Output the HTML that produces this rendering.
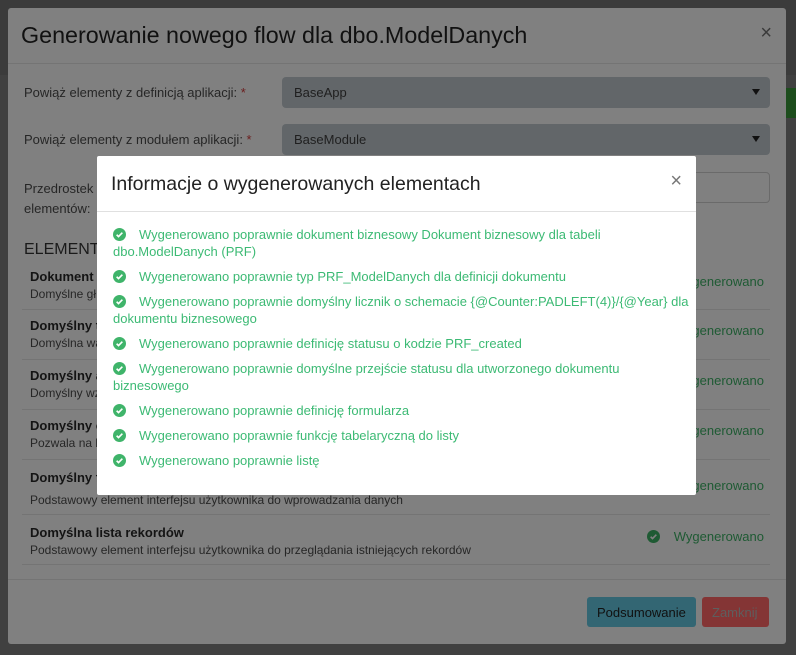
<!DOCTYPE html>
<html><head><meta charset="utf-8"><style>
*{box-sizing:border-box;margin:0;padding:0}
body{width:796px;height:654px;background:#3b3b3b;font-family:"Liberation Sans","DejaVu Sans",sans-serif;position:relative;overflow:hidden}
.bg1{position:absolute;left:0;top:75px;width:796px;height:580px;background:#404040}
.gbtn{position:absolute;left:776px;top:88px;width:20px;height:30px;background:#1d4d1d}
.outer{position:absolute;left:8px;top:8px;width:778px;height:636px;background:#808080;border-radius:3px;color:#1a1a1a}
.oh{height:56px;border-bottom:1px solid #747474;position:relative}
.oh h1{position:absolute;left:13px;top:14px;font-size:23.3px;font-weight:normal;color:#111}
.x{position:absolute;font-size:20px;color:#3a3a3a}
.lbl{position:absolute;left:16px;font-size:13px;color:#262626}
.lbl b{color:#6b1c1c;font-weight:normal}
.sel{position:absolute;left:274px;width:488px;height:31px;background:#626669;border-radius:4px;font-size:13px;color:#1f1f1f;padding:8px 12px}
.sel:after{content:"";position:absolute;right:10px;top:12px;border-left:4px solid transparent;border-right:4px solid transparent;border-top:6px solid #111}
.inp{position:absolute;left:274px;top:164px;width:488px;height:31px;border:1px solid #6a6a6a;border-radius:4px}
.row{position:absolute;left:14px;width:748px;border-bottom:1px solid #747474;height:50px}
.row .t{position:absolute;left:8px;top:8px;font-weight:bold;font-size:13px;color:#141414}
.row .d{position:absolute;left:8px;top:26px;font-size:12px;color:#262626}
.row .s{position:absolute;right:6px;top:13px;font-size:13px;color:#1e5a33}
.ft{position:absolute;left:0;top:571px;width:778px;border-top:1px solid #747474}
.btn{position:absolute;top:589px;height:30px;border-radius:3px;font-size:13px;padding:8px 10px}
.inner{position:absolute;left:97px;top:156px;width:599px;height:339px;background:#fff;border-radius:2px}
.ih{height:56px;border-bottom:1px solid #e0e0e0;position:relative}
.ih h2{position:absolute;left:14px;top:17px;font-size:19.5px;font-weight:normal;color:#222}
.items{position:absolute;left:16px;top:70px;width:586px;font-size:13px;color:#3cba74;line-height:17px}
.it{margin-bottom:8px}
.ck{display:inline-block;width:13px;height:13px;vertical-align:-2px;margin-right:13px}
</style></head><body>
<div class="bg1"></div><div class="gbtn"></div>
<div class="outer">
<div class="oh"><h1>Generowanie nowego flow dla dbo.ModelDanych</h1><span class="x" style="right:14px;top:14px">×</span></div>
<div class="lbl" style="top:77px">Powiąż elementy z definicją aplikacji: <b>*</b></div>
<div class="sel" style="top:69px">BaseApp</div>
<div class="lbl" style="top:124px">Powiąż elementy z modułem aplikacji: <b>*</b></div>
<div class="sel" style="top:116px">BaseModule</div>
<div class="lbl" style="top:171px;line-height:20px">Przedrostek dla<br>elementów:</div>
<div class="inp"></div>
<div style="position:absolute;left:16px;top:233px;font-size:16px;color:#1a1a1a">ELEMENTY</div>
<div class="row" style="top:253px;height:49px"><div class="t">Dokument</div><div class="d">Domyślne gł</div><div class="s">Wygenerowano</div></div>
<div class="row" style="top:302px"><div class="t">Domyślny t</div><div class="d">Domyślna wa</div><div class="s">Wygenerowano</div></div>
<div class="row" style="top:352px"><div class="t">Domyślny a</div><div class="d">Domyślny wz</div><div class="s">Wygenerowano</div></div>
<div class="row" style="top:402px"><div class="t">Domyślny c</div><div class="d">Pozwala na b</div><div class="s">Wygenerowano</div></div>
<div class="row" style="top:452px;height:55px"><div class="t" style="top:10px">Domyślny f</div><div class="d" style="top:33px">Podstawowy element interfejsu użytkownika do wprowadzania danych</div><div class="s" style="top:18px">Wygenerowano</div></div>
<div class="row" style="top:507px"><div class="t" style="top:10px">Domyślna lista rekordów</div><div class="d" style="top:28px">Podstawowy element interfejsu użytkownika do przeglądania istniejących rekordów</div><div class="s" style="top:14px"><svg width="13" height="13" viewBox="0 0 16 16" style="vertical-align:-2px;margin-right:14px"><circle cx="8" cy="8" r="8" fill="#1e5a33"/><path d="M4.5 8.3l2.3 2.3 4.7-4.8" stroke="#808080" stroke-width="2" fill="none"/></svg>Wygenerowano</div></div>
<div class="ft"></div>
<div class="btn" style="left:579px;width:109px;background:#336673;color:#111">Podsumowanie</div>
<div class="btn" style="left:694px;width:67px;background:#843535;color:#5e5e5e">Zamknij</div>
</div>
<div class="inner">
<div class="ih"><h2>Informacje o wygenerowanych elementach</h2><span class="x" style="right:14px;top:14px;color:#777;font-size:20px">×</span></div>
<div class="items">
<div class="it"><svg class="ck" viewBox="0 0 16 16"><circle cx="8" cy="8" r="8" fill="#3fb46a"/><path d="M4.5 8.3l2.3 2.3 4.7-4.8" stroke="#fff" stroke-width="2" fill="none"/></svg>Wygenerowano poprawnie dokument biznesowy Dokument biznesowy dla tabeli<br>dbo.ModelDanych (PRF)</div>
<div class="it"><svg class="ck" viewBox="0 0 16 16"><circle cx="8" cy="8" r="8" fill="#3fb46a"/><path d="M4.5 8.3l2.3 2.3 4.7-4.8" stroke="#fff" stroke-width="2" fill="none"/></svg>Wygenerowano poprawnie typ PRF_ModelDanych dla definicji dokumentu</div>
<div class="it"><svg class="ck" viewBox="0 0 16 16"><circle cx="8" cy="8" r="8" fill="#3fb46a"/><path d="M4.5 8.3l2.3 2.3 4.7-4.8" stroke="#fff" stroke-width="2" fill="none"/></svg>Wygenerowano poprawnie domyślny licznik o schemacie {@Counter:PADLEFT(4)}/{@Year} dla<br>dokumentu biznesowego</div>
<div class="it"><svg class="ck" viewBox="0 0 16 16"><circle cx="8" cy="8" r="8" fill="#3fb46a"/><path d="M4.5 8.3l2.3 2.3 4.7-4.8" stroke="#fff" stroke-width="2" fill="none"/></svg>Wygenerowano poprawnie definicję statusu o kodzie PRF_created</div>
<div class="it"><svg class="ck" viewBox="0 0 16 16"><circle cx="8" cy="8" r="8" fill="#3fb46a"/><path d="M4.5 8.3l2.3 2.3 4.7-4.8" stroke="#fff" stroke-width="2" fill="none"/></svg>Wygenerowano poprawnie domyślne przejście statusu dla utworzonego dokumentu<br>biznesowego</div>
<div class="it"><svg class="ck" viewBox="0 0 16 16"><circle cx="8" cy="8" r="8" fill="#3fb46a"/><path d="M4.5 8.3l2.3 2.3 4.7-4.8" stroke="#fff" stroke-width="2" fill="none"/></svg>Wygenerowano poprawnie definicję formularza</div>
<div class="it"><svg class="ck" viewBox="0 0 16 16"><circle cx="8" cy="8" r="8" fill="#3fb46a"/><path d="M4.5 8.3l2.3 2.3 4.7-4.8" stroke="#fff" stroke-width="2" fill="none"/></svg>Wygenerowano poprawnie funkcję tabelaryczną do listy</div>
<div class="it"><svg class="ck" viewBox="0 0 16 16"><circle cx="8" cy="8" r="8" fill="#3fb46a"/><path d="M4.5 8.3l2.3 2.3 4.7-4.8" stroke="#fff" stroke-width="2" fill="none"/></svg>Wygenerowano poprawnie listę</div>
</div>
</div>
</body></html>
